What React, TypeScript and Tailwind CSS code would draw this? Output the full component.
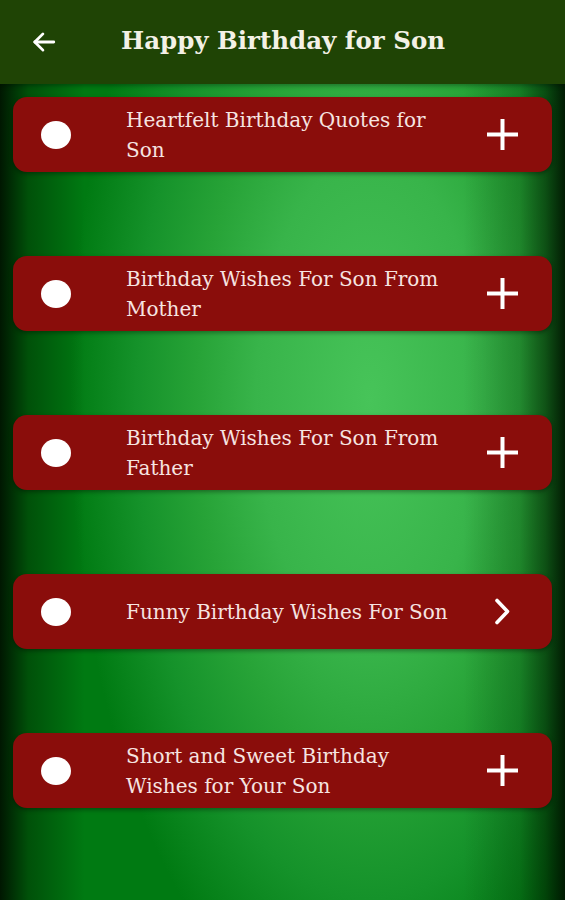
import React from 'react';

// Birthday wishes for son - category list screen

interface Category {
  id: number;
  title: string;
  expandable: boolean;
}

const categories: Category[] = [
  { id: 1, title: 'Heartfelt Birthday Quotes for Son', expandable: true },
  { id: 2, title: 'Birthday Wishes For Son From Mother', expandable: true },
  { id: 3, title: 'Birthday Wishes For Son From Father', expandable: true },
  { id: 4, title: 'Funny Birthday Wishes For Son', expandable: false },
  { id: 5, title: 'Short and Sweet Birthday Wishes for Your Son', expandable: true },
];

const serif = { fontFamily: '"DejaVu Serif", "Liberation Serif", serif' };

function BackArrow() {
  return (
    <svg width="26" height="26" viewBox="0 0 24 24" fill="none" stroke="white" strokeWidth="2.6" strokeLinecap="round" strokeLinejoin="round">
      <path d="M21 12H3.5" />
      <path d="M11 4.5L3.5 12L11 19.5" />
    </svg>
  );
}

function PlusIcon() {
  return (
    <svg width="31" height="31" viewBox="0 0 31 31" fill="none" stroke="white" strokeWidth="4">
      <path d="M15.5 0V31" />
      <path d="M0 15.5H31" />
    </svg>
  );
}

function ChevronIcon() {
  return (
    <svg width="17" height="27" viewBox="0 0 17 27" fill="none" stroke="white" strokeWidth="3.6" strokeLinecap="round" strokeLinejoin="round">
      <path d="M3 2.5L13.5 13.5L3 24.5" />
    </svg>
  );
}

function CategoryCard({ item }: { item: Category }) {
  return (
    <div className="flex items-center h-[75px] rounded-[14px] bg-[#8a0d0b] shadow-[0_2px_4px_rgba(0,0,0,0.35)] pl-[28px] pr-[34px]">
      <span className="w-[30px] h-[28px] rounded-[50%] bg-white flex-shrink-0" />
      <p className="ml-[55px] w-[332px] text-[20px] leading-[30px] text-[#f6e4e1]" style={serif}>
        {item.title}
      </p>
      <div className="ml-auto flex items-center justify-center w-[31px]">
        {item.expandable ? <PlusIcon /> : <ChevronIcon />}
      </div>
    </div>
  );
}

export default function App() {
  return (
    <div className="w-[565px] h-[900px] flex flex-col overflow-hidden bg-[#007a12] bg-[linear-gradient(to_right,rgba(0,18,0,0.95)_0%,rgba(0,40,0,0.5)_5%,rgba(0,60,0,0)_15%,rgba(0,60,0,0)_82%,rgba(0,40,0,0.25)_92%,rgba(0,30,0,0.6)_96.5%,rgba(0,18,0,0.92)_100%),radial-gradient(ellipse_300px_640px_at_370px_400px,#47c459_0%,#38b44a_38%,#27a337_58%,#15922a_78%,#007a12_100%)]">
      {/* Toolbar */}
      <header className="h-[84px] flex-shrink-0 flex items-center bg-[#1f4405] shadow-[0_2px_4px_rgba(0,0,0,0.3)]">
        <button type="button" className="ml-[31px] w-[26px] h-[26px] flex items-center justify-center" aria-label="Back">
          <BackArrow />
        </button>
        <h1 className="ml-[64px] -mt-[2px] text-[24.5px] font-bold text-[#f3f1e6]" style={serif}>
          Happy Birthday for Son
        </h1>
      </header>

      {/* Category list */}
      <div className="flex flex-col gap-[84px] px-[13px] pt-[13px]">
        {categories.map((c) => (
          <CategoryCard key={c.id} item={c} />
        ))}
      </div>
    </div>
  );
}
